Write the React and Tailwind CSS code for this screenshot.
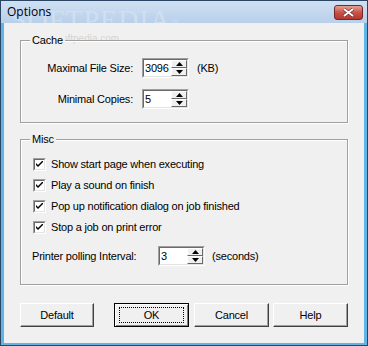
import React from 'react';

const ui = { fontFamily: '"Liberation Sans", Arial, sans-serif' };

const txt = 'text-[11px] tracking-[-0.2px] text-black';

const SpinBox = ({ value }) => (
  <div className="flex h-[20px] w-[47px] shrink-0 bg-white border border-t-[#a0a0a0] border-l-[#a0a0a0] border-b-white border-r-white">
    <div className="flex flex-1 border border-t-[#696969] border-l-[#696969] border-b-[#e3e3e3] border-r-[#e3e3e3]">
      <span className={`flex-1 pl-[1px] leading-[16px] ${txt}`}>{value}</span>
      <div className="flex w-[16px] flex-col">
        <SpinButton up />
        <SpinButton />
      </div>
    </div>
  </div>
);

const SpinButton = ({ up }) => (
  <div className="flex h-[9px] items-center justify-center bg-[#f0f0f0] border border-t-white border-l-white border-b-[#696969] border-r-[#696969]">
    <svg width="7" height="4" viewBox="0 0 7 4">
      {up ? <path d="M3.5 0 L7 4 L0 4 Z" fill="#000" /> : <path d="M0 0 L7 0 L3.5 4 Z" fill="#000" />}
    </svg>
  </div>
);

const Check = ({ label }) => (
  <label className="flex h-[13px] items-center gap-[5px]">
    <span className="flex h-[13px] w-[13px] items-center justify-center bg-white border border-t-[#a0a0a0] border-l-[#a0a0a0] border-b-white border-r-white">
      <span className="flex h-[11px] w-[11px] items-center justify-center border border-t-[#696969] border-l-[#696969] border-b-[#e3e3e3] border-r-[#e3e3e3]">
        <svg width="7" height="7" viewBox="0 0 7 7">
          <path d="M0 2 L0 4 L2 6 L7 1 L7 -1 L2 4 Z" fill="#000" />
        </svg>
      </span>
    </span>
    <span className={txt}>{label}</span>
  </label>
);

const GroupBox = ({ title, className = '', children }) => (
  <fieldset
    className={`relative border border-[#a0a0a0] shadow-[1px_1px_0_#fff,inset_1px_1px_0_#fff] ${className}`}
  >
    <span className={`absolute left-[9px] top-[-8px] bg-[#f0f0f0] px-[2px] leading-[14px] ${txt}`}>
      {title}
    </span>
    {children}
  </fieldset>
);

const Button = ({ children, isDefault }) => (
  <button
    type="button"
    className={`flex h-[24px] w-[75px] items-center justify-center bg-[#f0f0f0] ${txt} ${
      isDefault
        ? 'border border-black shadow-[inset_1px_1px_0_#fff,inset_-1px_-1px_0_#808080]'
        : 'border border-t-white border-l-white border-b-[#404040] border-r-[#404040] shadow-[inset_-1px_-1px_0_#a0a0a0]'
    }`}
  >
    {isDefault ? (
      <span className="flex h-[16px] w-[65px] items-center justify-center border border-dotted border-black">
        {children}
      </span>
    ) : (
      children
    )}
  </button>
);

export default function App() {
  return (
    <div
      className="relative flex h-[346px] w-[368px] flex-col overflow-hidden border border-[#2c4563] bg-[#bfd5ee]"
      style={ui}
    >
      <div className="relative flex h-[22px] items-center bg-gradient-to-b from-[#cfe0f3] to-[#b9d0ea] pl-[6px]">
        <span
          className="pointer-events-none absolute left-[10px] top-[-2px] text-[28px] tracking-[1px] text-[#d8e3ee] opacity-70"
          style={{ fontFamily: '"Liberation Serif", serif' }}
        >
          SOFTPEDIA<sup className="text-[8px]">™</sup>
        </span>
        <span
          className="relative text-[12px] text-black"
          style={{ fontFamily: '"Open Sans", "Noto Sans", sans-serif' }}
        >
          Options
        </span>
        <div className="absolute right-[4px] top-[4px] flex h-[15px] w-[29px] items-center justify-center rounded-[3px] border border-[#6e2a2a] bg-gradient-to-b from-[#e6a090] via-[#c9524a] to-[#b4382e]">
          <svg width="11" height="9" viewBox="0 0 11 9">
            <path d="M1 1 L10 8 M10 1 L1 8" stroke="#5a2020" strokeWidth="3" />
            <path d="M1 1 L10 8 M10 1 L1 8" stroke="#fff" strokeWidth="2" />
          </svg>
        </div>
      </div>

      <div className="relative flex flex-1 flex-col border-x-[3px] border-b-[2px] border-x-[#5fb6e6] border-b-[#5fb6e6] bg-[#f0f0f0] px-[16px] pt-[17px]">
        <span className="pointer-events-none absolute left-[29px] top-[8px] text-[10px] text-[#d4d4d4]">
          www.softpedia.com
        </span>

        <GroupBox title="Cache" className="h-[83px] w-[328px]">
          <div className="flex flex-col gap-[11px] pt-[17px]">
            <div className="flex items-center">
              <span className={`w-[112px] text-right ${txt}`}>Maximal File Size:</span>
              <span className="w-[9px]" />
              <SpinBox value="3096" />
              <span className={`pl-[8px] ${txt}`}>(KB)</span>
            </div>
            <div className="flex items-center">
              <span className={`w-[112px] text-right ${txt}`}>Minimal Copies:</span>
              <span className="w-[9px]" />
              <SpinBox value="5" />
            </div>
          </div>
        </GroupBox>

        <GroupBox title="Misc" className="mt-[16px] h-[146px] w-[328px]">
          <div className="flex flex-col gap-[8px] pl-[12px] pt-[18px]">
            <Check label="Show start page when executing" />
            <Check label="Play a sound on finish" />
            <Check label="Pop up notification dialog on job finished" />
            <Check label="Stop a job on print error" />
          </div>
          <div className="mt-[12px] flex items-center pl-[11px]">
            <span className={`w-[126px] ${txt}`}>Printer polling Interval:</span>
            <SpinBox value="3" />
            <span className={`pl-[7px] ${txt}`}>(seconds)</span>
          </div>
        </GroupBox>

        <div className="mt-[18px] flex">
          <Button>Default</Button>
          <div className="ml-[20px]">
            <Button isDefault>OK</Button>
          </div>
          <div className="ml-[5px]">
            <Button>Cancel</Button>
          </div>
          <div className="ml-[4px]">
            <Button>Help</Button>
          </div>
        </div>
      </div>
    </div>
  );
}
